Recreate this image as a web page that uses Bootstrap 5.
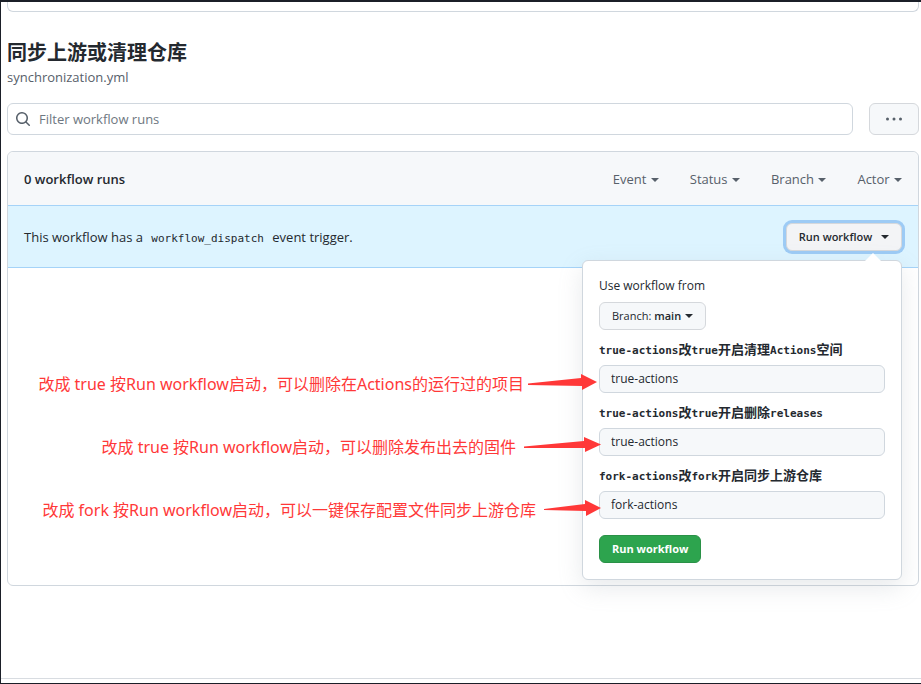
<!DOCTYPE html>
<html lang="zh-CN">
<head>
<meta charset="utf-8">
<meta name="viewport" content="width=device-width, initial-scale=1">
<title>Workflow runs</title>
<link href="https://cdn.jsdelivr.net/npm/bootstrap@5.3.0/dist/css/bootstrap.min.css" rel="stylesheet">
<style>
  body { font-family: "Open Sans", "Noto Sans CJK SC", sans-serif; font-size: 13px; line-height: 20px; color: #24292f; }
  .page-frame { border: solid #1b1f28; border-width: 2px 0 1px 1px; padding: 0 2px 4px 6px; }
  .previous-box { height: 10px; border: 1px solid #d0d7de; border-top: 0; border-radius: 0 0 6px 6px; }
  .page-title { font-size: 20px; line-height: 28px; margin-top: 27px; }
  .muted { color: #57606a; }
  .filter-box { height: 32px; border: 1px solid #d0d7de; border-radius: 6px; padding: 0 7px; }
  .filter-box input { font-size: 13px; outline: 0; color: #24292f; }
  .filter-box input::placeholder { color: #6e7781; opacity: 1; }
  .soft-btn { background: #f6f8fa; border: 1px solid #d5d8dc; border-radius: 6px; color: #24292f; }
  .more-btn { width: 50px; height: 32px; }
  .runs-panel { border: 1px solid #d0d7de; border-radius: 6px; }
  .runs-head { height: 53px; background: #f6f8fa; border-radius: 6px 6px 0 0; }
  .filters { gap: 31px; }
  .filters button { color: #57606a; }
  .caret { width: 0; height: 0; border: 4px solid transparent; border-top-color: currentColor; border-bottom: 0; display: inline-block; vertical-align: 2px; margin-left: 1px; }
  .notice { height: 63px; background: #ddf4ff; border: solid #a5d3f8; border-width: 1px 0; }
  code.event-name { font: 11px/16px "DejaVu Sans Mono", monospace; color: #24292f; padding: 0 5px; }
  .small-btn { height: 28px; font-size: 11px; line-height: 16px; padding: 0 12px; }
  .run-toggle { background: #f3f4f6; box-shadow: 0 0 0 3px #9dcbf5; }
  .run-toggle .caret { margin-left: 6px; }
  .popover-panel { position: absolute; top: 37px; right: 0; width: 320px; padding: 16px; background: #fff; border: 1px solid #d0d7de; border-radius: 6px; box-shadow: 0 8px 24px rgba(140,149,159,.2); z-index: 2; }
  .popover-panel::before { content: ""; position: absolute; top: -8px; right: 20px; border: 8px solid transparent; border-top: 0; border-bottom-color: #fff; }
  .from-label { line-height: 17px; font-size: 12px; margin-bottom: 8px; }
  .popover-panel label { display: block; height: 17px; font: bold 11px/14px "DejaVu Sans Mono", "Noto Sans CJK SC", monospace; margin: 12px 0 6px; white-space: nowrap; }
  .popover-panel label span { font-family: "Noto Sans CJK SC", sans-serif; font-size: 13px; }
  .popover-panel input { display: block; width: 100%; height: 28px; font-size: 12px; padding: 0 11px; background: #f6f8fa; border: 1px solid #d0d7de; border-radius: 6px; color: #24292f; }
  .go-btn { background: #2da44e; border: 1px solid #2a9147; border-radius: 6px; color: #fff; margin-top: 16px; }
  .notes { position: relative; z-index: 3; pointer-events: none; color: #ff3838; font: 16px/24px "Noto Sans CJK SC", sans-serif; padding: 103px 316px 64px 0; gap: 39px; }
  .notes > div { height: 24px; }
  .notes .en { font-family: "Noto Sans", sans-serif; }
  .notes svg { flex: none; }
  .page-foot { border-top: 1px solid #d8dce1; margin: 0 -2px 0 -6px; }
</style>
</head>
<body>
<div class="page-frame min-vh-100 d-flex flex-column">
  <div class="previous-box"></div>
  <h1 class="page-title fw-bold mb-0">同步上游或清理仓库</h1>
  <div class="muted">synchronization.yml</div>

  <div class="d-flex gap-3 my-3">
    <div class="filter-box d-flex align-items-center flex-grow-1">
      <svg width="16" height="16" viewBox="0 0 16 16" fill="#57606a" aria-hidden="true"><path d="M11.5 7a4.499 4.499 0 11-8.998 0A4.499 4.499 0 0111.5 7zm-.82 4.74a6 6 0 111.06-1.06l3.04 3.04a.75.75 0 11-1.06 1.06l-3.04-3.04z" fill-rule="evenodd"/></svg>
      <input type="text" class="border-0 flex-grow-1 p-0 ms-2" placeholder="Filter workflow runs" aria-label="Filter workflow runs">
    </div>
    <button type="button" class="soft-btn more-btn p-0 d-flex align-items-center justify-content-center" aria-label="More options">
      <svg width="16" height="16" viewBox="0 0 16 16" fill="#57606a"><circle cx="1.5" cy="8" r="1.5"/><circle cx="8" cy="8" r="1.5"/><circle cx="14.5" cy="8" r="1.5"/></svg>
    </button>
  </div>

  <section class="runs-panel">
    <div class="runs-head d-flex align-items-center justify-content-between px-3">
      <span class="fw-semibold">0 workflow runs</span>
      <div class="filters d-flex">
        <button type="button" class="border-0 bg-transparent p-0">Event <i class="caret"></i></button>
        <button type="button" class="border-0 bg-transparent p-0">Status <i class="caret"></i></button>
        <button type="button" class="border-0 bg-transparent p-0">Branch <i class="caret"></i></button>
        <button type="button" class="border-0 bg-transparent p-0">Actor <i class="caret"></i></button>
      </div>
    </div>
    <div class="notice d-flex align-items-center justify-content-between px-3">
      <span>This workflow has a <code class="event-name">workflow_dispatch</code> event trigger.</span>
      <div class="position-relative">
        <button type="button" class="soft-btn small-btn run-toggle fw-semibold d-block">Run workflow <i class="caret"></i></button>
        <form class="popover-panel">
          <div class="from-label">Use workflow from</div>
          <button type="button" class="soft-btn small-btn d-block">Branch: <b class="fw-semibold">main</b> <i class="caret"></i></button>
          <label for="clean">true-actions<span>改</span>true<span>开启清理</span>Actions<span>空间</span></label>
          <input id="clean" type="text" value="true-actions">
          <label for="release">true-actions<span>改</span>true<span>开启删除</span>releases</label>
          <input id="release" type="text" value="true-actions">
          <label for="fork">fork-actions<span>改</span>fork<span>开启同步上游仓库</span></label>
          <input id="fork" type="text" value="fork-actions">
          <button type="button" class="go-btn small-btn fw-bold d-block">Run workflow</button>
        </form>
      </div>
    </div>
    <div class="notes d-flex flex-column align-items-end text-nowrap">
      <div class="d-flex align-items-center gap-1 pe-1"><span>改成<span class="en"> true </span>按<span class="en">Run workflow</span>启动，可以删除在<span class="en">Actions</span>的运行过的项目</span>
        <svg width="70" height="18" viewBox="0 0 70 18" fill="#ff3838"><path d="M0 9.500 53 4V0L69 8 54 16V12L0 11Z"/></svg></div>
      <div class="d-flex align-items-center gap-2"><span>改成<span class="en"> true </span>按<span class="en">Run workflow</span>启动，可以删除发布出去的固件</span>
        <svg width="78" height="18" viewBox="0 0 78 18" fill="#ff3838"><path d="M0 9.500 60 4V0L77 7.500 61 15V11L0 11Z"/></svg></div>
      <div class="d-flex align-items-center gap-2"><span>改成<span class="en"> fork </span>按<span class="en">Run workflow</span>启动，可以一键保存配置文件同步上游仓库</span>
        <svg width="58" height="18" viewBox="0 0 58 18" fill="#ff3838"><path d="M0 9 41 4V0L57 8 42 16V11L0 10Z"/></svg></div>
    </div>
  </section>
  <div class="page-foot mt-auto"></div>
</div>
<script src="https://cdn.jsdelivr.net/npm/bootstrap@5.3.0/dist/js/bootstrap.bundle.min.js"></script>
</body>
</html>
